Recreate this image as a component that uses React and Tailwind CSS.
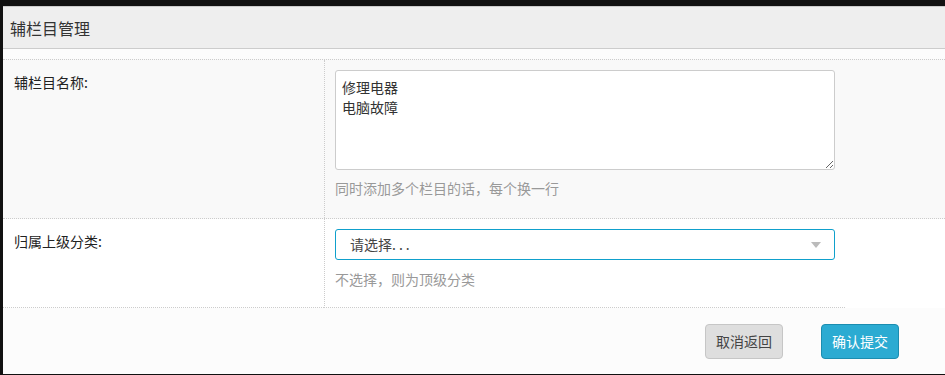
const font = { fontFamily: '"Noto Sans CJK SC", "Noto Sans", sans-serif' }

const App = () => {
  return (
    <div className="w-[945px] h-[375px] bg-[#111] pl-[3px] pt-[6px] pb-px" style={font}>
      <div className="flex flex-col h-full bg-[#fcfcfc]">
        {/* header */}
        <div className="h-[43px] shrink-0 flex items-center px-[7px] border-y border-[#ccc] bg-[#eee] text-[16px] text-[#333]">
          辅栏目管理
        </div>

        <div className="pt-[10px]">
          {/* row 1 */}
          <div className="flex h-[160px] border-y border-dotted border-[#ccc] bg-[#f9f9f9]">
            <div className="w-[321px] shrink-0 pl-[11px] pt-[12px] text-[14px] leading-[20px] text-[#222]">
              辅栏目名称:
            </div>
            <div className="flex-1 border-l border-dotted border-[#ccc] pl-[10px] pt-[10px]">
              <textarea
                readOnly
                defaultValue={'修理电器\n电脑故障'}
                className="block w-[500px] h-[100px] rounded-[3px] border border-[#ccc] bg-white px-[6px] py-[6px] text-[14px] leading-[20px] text-[#333] outline-none"
                style={font}
              />
              <div className="mt-[8px] text-[14px] leading-[20px] text-[#999]">
                同时添加多个栏目的话，每个换一行
              </div>
            </div>
          </div>

          {/* row 2 */}
          <div className="flex h-[89px] bg-white">
            <div className="w-[321px] shrink-0 border-b border-dotted border-[#ccc] pl-[11px] pt-[12px] text-[14px] leading-[20px] text-[#222]">
              归属上级分类:
            </div>
            <div className="w-[521px] shrink-0 border-l border-b border-dotted border-[#ccc] pl-[10px] pt-[10px]">
              <div className="relative flex items-center w-[500px] h-[31px] rounded-[3px] border border-[#0fa0cc] bg-white pl-[14px] text-[14px] text-[#444]">
                请选择<span className="tracking-[3px]">...</span>
                <span className="absolute right-[13px] top-[12px] w-0 h-0 border-x-[5px] border-x-transparent border-t-[6px] border-t-[#bbb]" />
              </div>
              <div className="mt-[9px] text-[14px] leading-[20px] text-[#999]">
                不选择，则为顶级分类
              </div>
            </div>
            <div className="flex-1" />
          </div>
        </div>

        {/* footer */}
        <div className="flex justify-end gap-[38px] pt-[16px] pr-[46px]">
          <button className="w-[78px] h-[35px] rounded-[4px] border border-[#c6c6c6] bg-[#dedede] text-[14px] text-[#444]">
            取消返回
          </button>
          <button className="w-[78px] h-[35px] rounded-[4px] border border-[#1b8db0] bg-[#2babd2] text-[14px] text-white">
            确认提交
          </button>
        </div>
      </div>
    </div>
  )
}

export default App
